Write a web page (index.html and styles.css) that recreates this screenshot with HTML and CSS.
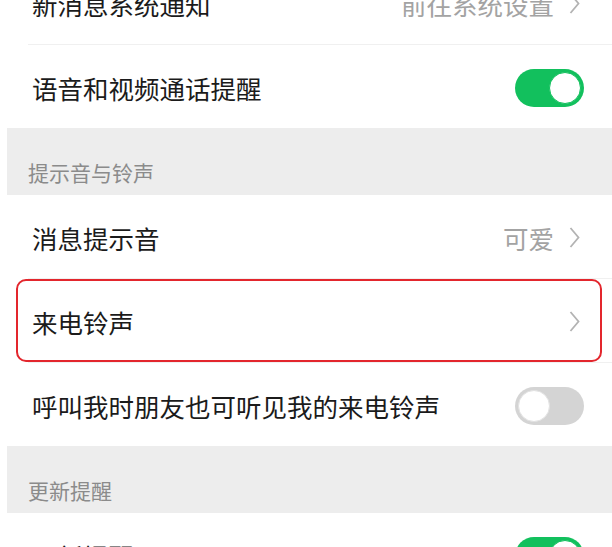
FILE: index.html
```html
<!DOCTYPE html>
<html lang="zh-CN">
<head>
    <meta charset="UTF-8">
    <meta name="viewport" content="width=device-width, initial-scale=1.0">
    <title>新消息通知</title>
    <link rel="stylesheet" href="styles.css">
</head>
<body>
    <div class="page">
        <div class="group">
            <div class="row">
                <span class="label">新消息系统通知</span>
                <span class="value">前往系统设置</span>
                <svg class="arrow" width="11" height="21" viewBox="0 0 11 21"><polyline points="1.5,1 9.5,10.5 1.5,20" /></svg>
            </div>
            <div class="row">
                <span class="label">语音和视频通话提醒</span>
                <span class="switch on"></span>
            </div>
        </div>

        <div class="section-title">提示音与铃声</div>
        <div class="group">
            <div class="row">
                <span class="label">消息提示音</span>
                <span class="value">可爱</span>
                <svg class="arrow" width="11" height="21" viewBox="0 0 11 21"><polyline points="1.5,1 9.5,10.5 1.5,20" /></svg>
            </div>
            <div class="row marked">
                <span class="label">来电铃声</span>
                <svg class="arrow" width="11" height="21" viewBox="0 0 11 21"><polyline points="1.5,1 9.5,10.5 1.5,20" /></svg>
            </div>
            <div class="row">
                <span class="label">呼叫我时朋友也可听见我的来电铃声</span>
                <span class="switch"></span>
            </div>
        </div>

        <div class="section-title">更新提醒</div>
        <div class="group">
            <div class="row">
                <span class="label">更新提醒</span>
                <span class="switch on"></span>
            </div>
        </div>
    </div>
</body>
</html>
```

FILE: styles.css
```css
body {
    margin: 0;
    background-color: #ffffff;
    font-family: "Noto Sans CJK SC", "Noto Sans", sans-serif;
    color: #1b1b1b;
    overflow: hidden;
}
.page {
    margin-top: -39px; /* la primera fila queda cortada arriba */
    padding-left: 7px;
}
.group {
    background-color: #ffffff;
}
.row {
    position: relative;
    display: flex;
    align-items: center;
    height: 83px;
    margin-left: 21px;
    padding: 0 27px 0 4px;
    border-top: 1px solid #f0f0f0;
}
.group .row:first-child {
    border-top: none;
}
.label {
    flex: 1;
    font-size: 25.5px;
    line-height: 1;
    padding-top: 3px;
}
.value {
    font-size: 25.5px;
    line-height: 1;
    color: #a3a3a3;
    margin-right: 15px;
    padding-top: 3px;
}
.arrow {
    margin-right: 5px;
    margin-top: 2px;
    fill: none;
    stroke: #b3b3b3;
    stroke-width: 1.8;
}
.switch {
    position: relative;
    width: 69px;
    height: 38px;
    border-radius: 19px;
    background-color: #d4d4d4;
    margin-top: 2px;
    margin-right: 1px;
}
.switch::after {
    content: "";
    position: absolute;
    left: 3px;
    top: 3px;
    width: 30px;
    height: 30px;
    border-radius: 50%;
    background-color: #ffffff;
    border: 1px solid #e2e2e2;
}
.switch.on {
    background-color: #12c05d;
}
.switch.on::after {
    left: auto;
    right: 3px;
    border-color: #12c05d;
}
.section-title {
    height: 67px;
    box-sizing: border-box;
    padding: 34px 0 0 21px;
    background-color: #ededed;
    font-size: 21px;
    line-height: 1;
    color: #8b8b8b;
}
/* recuadro rojo de resaltado */
.marked::after {
    content: "";
    position: absolute;
    left: -12px;
    right: 10px;
    top: 0;
    bottom: 0;
    border: 2px solid #e3262d;
    border-radius: 10px;
}
```
